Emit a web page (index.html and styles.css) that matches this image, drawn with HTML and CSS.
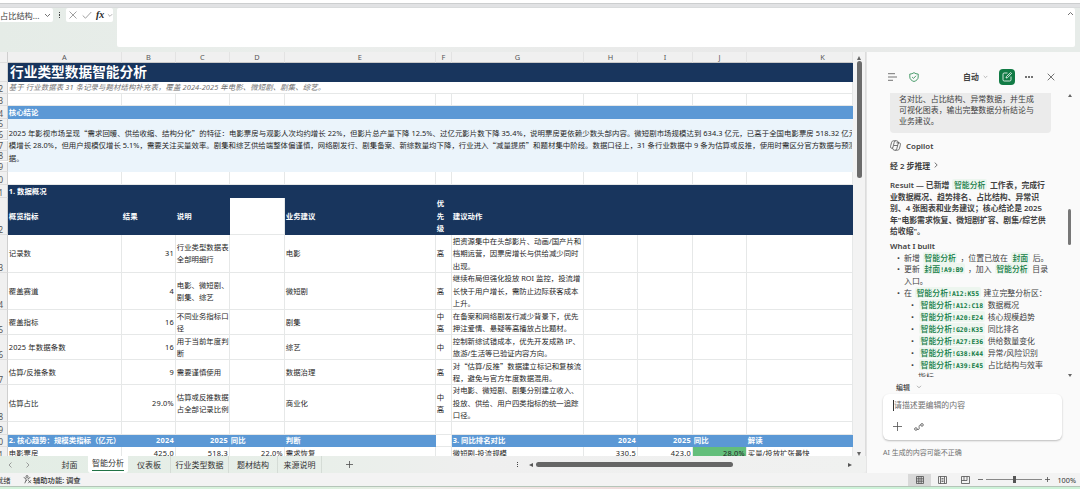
FILE: index.html
```html
<!DOCTYPE html>
<html lang="zh-CN">
<head>
    <meta charset="UTF-8">
    <meta name="viewport" content="width=device-width, initial-scale=1.0">
    <title>行业类型数据智能分析</title>
    <link rel="stylesheet" href="styles.css">
</head>
<body>
<div class="app">
    <div class="ribbon-edge"></div>
    <div class="formula-bar">
        <div class="name-box">
            <span>占比结构...</span>
            <svg width="7" height="5" viewBox="0 0 7 5"><path d="M1 1l2.5 2.5L6 1"/></svg>
        </div>
        <div class="dots"><i></i><i></i><i></i></div>
        <div class="fx-box">
            <svg class="pale" width="8" height="8" viewBox="0 0 8 8"><path d="M.5.5l7 7M7.500.5l-7 7"/></svg>
            <svg class="pale" width="10" height="8" viewBox="0 0 10 8"><path d="M.7 4.500L3.500 7.200 9.300 1"/></svg>
            <b>fx</b>
            <svg class="pale" width="6" height="5" viewBox="0 0 7 5"><path d="M1 1l2.500 2.500L6 1"/></svg>
        </div>
        <div class="formula-input"><svg width="7" height="5" viewBox="0 0 7 5"><path d="M1 4l2.500-2.500L6 4"/></svg></div>
    </div>

    <div class="main">
        <div class="book">
            <div class="sheet-area">
                <div class="sheet">
                    <div class="row head"><i></i><div>A</div><div>B</div><div>C</div><div>D</div><div>E</div><div>F</div><div>G</div><div>H</div><div>I</div><div>J</div><div class="k">K</div></div>
                    <div class="row r1 navy"><i></i><div class="all title">行业类型数据智能分析</div></div>
                    <div class="row r2"><i>2</i><div class="all note">基于 行业数据表 31 条记录与题材结构补充表，覆盖 2024-2025 年电影、微短剧、剧集、综艺。</div></div>
                    <div class="row h12"><i>3</i><div></div><div></div><div></div><div></div><div></div><div></div><div></div><div></div><div></div><div></div><div></div></div>
                    <div class="row h12 blue"><i>4</i><div class="all">核心结论</div></div>
                    <div class="row summary">
                        <div class="nums"><i>5</i><i>6</i><i>7</i><i>8</i><i>9</i></div>
                        <div class="all">
                            <p class="l1">2025 年影视市场呈现<q>“</q>需求回暖、供给收缩、结构分化<q>”</q>的特征：电影票房与观影人次均约增长 22%，但影片总产量下降 12.5%、过亿元影片数下降 35.4%，说明票房更依赖少数头部内容。微短剧市场规模达到 634.3 亿元，已高于全国电影票房 518.32 亿元</p>
                            <p class="l2">模增长 28.0%，但用户规模仅增长 5.1%，需要关注买量效率。剧集和综艺供给端整体偏谨慎，网络剧发行、剧集备案、新综数量均下降，行业进入<q>“</q>减量提质<q>”</q>和题材集中阶段。数据口径上，31 条行业数据中 9 条为估算或反推，使用时需区分官方数据与预测</p>
                            <p>据。</p>
                        </div>
                    </div>
                    <div class="row h13"><i>10</i><div></div><div></div><div></div><div></div><div></div><div></div><div></div><div></div><div></div><div></div><div></div></div>
                    <div class="row h12 navy"><i>11</i><div class="all">1. 数据概况</div></div>
                    <div class="row h37 navy"><i>12</i><div>概览指标</div><div>结果</div><div>说明</div><div class="empty"></div><div>业务建议</div><div>优<br>先<br>级</div><div>建议动作</div><div></div><div></div><div></div><div></div></div>
                    <div class="row h37"><i>13</i><div>记录数</div><div class="n">31</div><div>行业类型数据表<br>全部明细行</div><div></div><div>电影</div><div>高</div><div>把资源集中在头部影片、动画/国产片和<br>档期运营，因票房增长与供给减少同时<br>出现。</div><div></div><div></div><div></div><div></div></div>
                    <div class="row h37"><i>14</i><div>覆盖赛道</div><div class="n">4</div><div>电影、微短剧、<br>剧集、综艺</div><div></div><div>微短剧</div><div>高</div><div>继续布局但强化投放 ROI 监控，投流增<br>长快于用户增长，需防止边际获客成本<br>上升。</div><div></div><div></div><div></div><div></div></div>
                    <div class="row h25"><i>15</i><div>覆盖指标</div><div class="n">16</div><div>不同业务指标口<br>径</div><div></div><div>剧集</div><div>中<br>高</div><div>在备案和网络剧发行减少背景下，优先<br>押注爱情、悬疑等高播放占比题材。</div><div></div><div></div><div></div><div></div></div>
                    <div class="row h25"><i>16</i><div class="wide">2025 年数据条数</div><div class="n">16</div><div>用于当前年度判<br>断</div><div></div><div>综艺</div><div>中</div><div>控制新综试错成本，优先开发成熟 IP、<br>旅游/生活等已验证内容方向。</div><div></div><div></div><div></div><div></div></div>
                    <div class="row h25"><i>17</i><div>估算/反推条数</div><div class="n">9</div><div>需要谨慎使用</div><div></div><div>数据治理</div><div>高</div><div><span>对<q>“</q>估算/反推<q>”</q>数据建立标记和复核流<br>程，避免与官方年度数据混用。</span></div><div></div><div></div><div></div><div></div></div>
                    <div class="row h37"><i>18</i><div>估算占比</div><div class="n">29.0%</div><div>估算或反推数据<br>占全部记录比例</div><div></div><div>商业化</div><div>中<br>高</div><div>对电影、微短剧、剧集分别建立收入、<br>投放、供给、用户四类指标的统一追踪<br>口径。</div><div></div><div></div><div></div><div></div></div>
                    <div class="row h12"><i>19</i><div></div><div></div><div></div><div></div><div></div><div></div><div></div><div></div><div></div><div></div><div></div></div>
                    <div class="row h12 blue"><i>20</i><div>2. 核心趋势：规模类指标（亿元）</div><div class="n">2024</div><div class="n">2025</div><div>同比</div><div>判断</div><div class="empty"></div><div>3. 同比排名对比</div><div class="n">2024</div><div class="n">2025</div><div>同比</div><div>解读</div></div>
                    <div class="row h12"><i>21</i><div>电影票房</div><div class="n">425.0</div><div class="n">518.3</div><div class="n">22.0%</div><div>需求恢复</div><div></div><div>微短剧-投流规模</div><div class="n">330.5</div><div class="n">423.0</div><div class="n good">28.0%</div><div>买量/投放扩张最快</div></div>
                </div>
                <div class="vscroll"><b class="up"></b><span></span><b class="down"></b></div>
            </div>
            <div class="tabs">
                <div class="arrows">
                    <svg width="4" height="6" viewBox="0 0 4 6"><path d="M3.500.5L1 3l2.500 2.500"/></svg>
                    <svg width="4" height="6" viewBox="0 0 4 6"><path d="M.5.5L3 3 .5 5.500"/></svg>
                </div>
                <div class="tab t1">封面</div>
                <div class="tab active"><span>智能分析</span></div>
                <div class="tab t3">仪表板</div>
                <div class="tab t4">行业类型数据</div>
                <div class="tab t5">题材结构</div>
                <div class="tab t6">来源说明</div>
                <div class="add"><svg width="7" height="7" viewBox="0 0 7 7"><path d="M3.500 0v7M0 3.500h7"/></svg></div>
                <div class="dots"><i></i><i></i><i></i></div>
                <div class="hscroll"><b class="left"></b><span></span><b class="right"></b></div>
            </div>
        </div>

        <div class="copilot">
            <div class="cp-head">
                <svg class="menu" width="9" height="8" viewBox="0 0 9 8"><path d="M0 .7h7M0 4h9M0 7.300h5"/></svg>
                <svg class="shield" width="10" height="10" viewBox="0 0 10 10"><path d="M5 .6C6.300 1.600 7.700 2 9.200 2v3c0 2.200-1.700 3.700-4.200 4.500C2.500 8.700.8 7.200.8 5V2C2.300 2 3.700 1.600 5 .6z"/><path d="M3.100 5l1.400 1.400 2.500-2.600"/></svg>
                <span class="auto">自动</span>
                <svg class="pale" width="5" height="4" viewBox="0 0 7 5"><path d="M1 1l2.500 2.500L6 1"/></svg>
                <div class="new"><svg width="10" height="10" viewBox="0 0 10 10"><path d="M5.500 1H2.200Q1 1 1 2.200v5.600Q1 9 2.200 9h5.600Q9 9 9 7.800V4.500M4 6l.4-1.500L8.700.5l.9.9L5.500 5.700z"/></svg></div>
                <div class="more"><i></i><i></i><i></i></div>
                <svg class="close" width="8" height="8" viewBox="0 0 8 8"><path d="M.7.7l6.600 6.600M7.300.7L.7 7.300"/></svg>
            </div>
            <div class="chat">
                <div class="bubble">名对比、占比结构、异常数据，并生成<br>可视化图表，输出完整数据分析结论与<br>业务建议。</div>
                <div class="who">
                    <svg width="11" height="11" viewBox="0 0 11 11"><path d="M3.200 8.300H2C.6 8.300.3 7.200.7 5.700l.8-3C1.900 1.300 2.600.8 3.600.8h3.200c.8 0 1.100.5 1.300 1.300l.2.700h.7c1.400 0 1.700 1 1.300 2.500l-.8 3c-.4 1.400-1.100 1.900-2.100 1.900H4.200c-.8 0-1-.5-1.200-1.300M5.600.8C4.700.9 4.400 1.500 4.100 2.700L3 7c-.2.8-.4 1.200-1 1.300M5.400 10.200c.9-.1 1.200-.7 1.500-1.900L8 4c.2-.8.400-1.200 1-1.200H6.500M4 5.500h3.500"/></svg>
                    <span>Copilot</span>
                </div>
                <div class="steps">经 2 步推理 <svg width="4" height="6" viewBox="0 0 4 6"><path d="M.7.6L3.200 3 .7 5.400"/></svg></div>
                <div class="result">Result — 已新增 <code>智能分析</code> 工作表，完成行<br>业数据概况、趋势排名、占比结构、异常识<br>别、4 张图表和业务建议；核心结论是 2025<br>年"电影需求恢复、微短剧扩容、剧集/综艺供<br>给收缩"。</div>
                <div class="built">What I built</div>
                <ul>
                    <li>新增 <code>智能分析</code> ，位置已放在 <code>封面</code> 后。</li>
                    <li>更新 <code>封面<small>!A9:B9</small></code> ，加入 <code>智能分析</code> 目录<br>入口。</li>
                    <li>在 <code>智能分析<small>!A12:K55</small></code> 建立完整分析区：
                        <ul>
                            <li><code>智能分析<small>!A12:C18</small></code> 数据概况</li>
                            <li><code>智能分析<small>!A20:E24</small></code> 核心规模趋势</li>
                            <li><code>智能分析<small>!G20:K35</small></code> 同比排名</li>
                            <li><code>智能分析<small>!A27:E36</small></code> 供给数量变化</li>
                            <li><code>智能分析<small>!G38:K44</small></code> 异常/风险识别</li>
                            <li><code>智能分析<small>!A39:E45</small></code> 占比结构与效率<br>指标</li>
                        </ul>
                    </li>
                </ul>
                <div class="cp-scroll"><b class="up"></b><span></span><b class="down"></b></div>
            </div>
            <div class="mode">编辑 <svg class="pale" width="6" height="4" viewBox="0 0 7 5"><path d="M1 1l2.500 2.500L6 1"/></svg></div>
            <div class="prompt">
                <div class="placeholder">请描述要编辑的内容</div>
                <div class="tools">
                    <svg width="9" height="9" viewBox="0 0 9 9"><path d="M4.500 0v9M0 4.500h9"/></svg>
                    <svg width="10" height="8" viewBox="0 0 10 8"><circle cx="1.900" cy="6" r="1.300"/><circle cx="8" cy="1.900" r="1.300"/><path d="M3.200 6.500c2.600.6 2-1.300 1.900-2.300C5 3 5.300 1.900 6.700 1.900"/></svg>
                </div>
            </div>
            <div class="disclaimer">AI 生成的内容可能不正确</div>
        </div>
    </div>

    <div class="status">
        <span class="ready">就绪</span>
        <svg width="9" height="9" viewBox="0 0 9 9"><circle cx="4" cy="1.500" r="1"/><path d="M.7 2.500L3 3.500v1.700L1.800 8.300M7.300 2.500L5 3.500v1.200M3 5.500l1 .2M5.200 5.200l2.800 3M8 5.200l-2.800 3"/></svg>
        <span class="a11y">辅助功能: 调查</span>
        <div class="views">
            <div class="on"><svg width="8" height="8" viewBox="0 0 8 8"><path d="M.5.5h7v7h-7zM.5 2.800h7M.5 5.200h7M2.800.5v7M5.200.5v7"/></svg></div>
            <div><svg width="9" height="8" viewBox="0 0 9 8"><path d="M.5.5h8v7h-8zM2.500.5v7M6.500.5v7M3.500 2.500h2M3.500 4h2M3.500 5.500h2"/></svg></div>
            <div><svg width="9" height="8" viewBox="0 0 9 8"><path d="M.5.5h8v7h-8zM3 .5v4h3v-4M.5 4.500H3"/></svg></div>
        </div>
        <svg width="5" height="5" viewBox="0 0 5 5"><path d="M0 2.500h5"/></svg>
        <div class="zoom"><b></b></div>
        <svg width="5" height="5" viewBox="0 0 5 5"><path d="M0 2.500h5M2.500 0v5"/></svg>
        <span class="pct">100%</span>
    </div>
    <div class="taskbar"></div>
</div>
</body>
</html>
```

FILE: styles.css
```css
* { box-sizing: border-box; }
body { margin: 0; font-family: "Noto Sans", "Noto Sans CJK SC", sans-serif; font-size: 7.4px; color: #262626; overflow: hidden; }
svg { fill: none; stroke: #505050; stroke-width: .8; flex: none; display: block; }
svg.pale { stroke: #888; }
i { font-style: normal; }
p { margin: 0; }
q { quotes: none; font-family: "Noto Sans CJK SC", sans-serif; }
q::before, q::after { content: none; }

.app { width: 1080px; height: 489px; display: flex; flex-direction: column; background: #ececec; }
.ribbon-edge { height: 8px; background: #e1e2e4; border-top: 3px solid #fff; border-bottom: 1px solid #d9dbdc; box-shadow: inset 0 1px #cccecf; }

/* formula bar */
.formula-bar { height: 44px; display: flex; align-items: flex-start; background: linear-gradient(90deg, #e5ece7, #ebeeec 30%, #e9e9e9 70%, #e7ece9); }
.name-box { width: 53px; height: 14px; display: flex; align-items: center; justify-content: space-between; padding-right: 2px; background: #fff; font-size: 8.200px; white-space: nowrap; color: #444; border-radius: 0 2px 2px 0; }
.dots { width: 13px; height: 14px; display: flex; flex-direction: column; align-items: center; justify-content: center; gap: 1px; }
.dots i { width: 1.300px; height: 1.300px; background: #444; }
.fx-box { width: 47px; height: 14px; display: flex; align-items: center; gap: 5px; padding-left: 3px; background: #fff; border-radius: 2px; }
.fx-box b { font: italic bold 10px/12px "Liberation Serif", serif; width: 9px; margin: 0 -3px 0 -1px; }
.formula-input { flex: 1; height: 39px; margin-left: 4px; margin-right: 5px; padding: 3px 1px; display: flex; justify-content: flex-end; background: #fff; border-radius: 2px; }

.main { height: 421px; display: flex; }
.book { width: 866px; display: flex; flex-direction: column; }
.sheet-area { height: 404px; display: flex; }

/* grid */
.sheet { width: 853px; height: 404px; overflow: hidden; background: #fff; }
.row { display: grid; grid-template-columns: 8px 114px 54px 54px 55px 151px 16px 132px 54px 55px 54px 106px; overflow: hidden; }
.row > div { display: flex; align-items: center; padding: 0 1px 0 .800px; border-right: 1px solid #e6e8e8; border-bottom: 1px solid #e6e8e8; line-height: 12.400px; white-space: nowrap; overflow: hidden; }
.row > .all { grid-column: 2 / -1; }
.row i { display: flex; align-items: flex-end; justify-content: flex-end; padding-right: 4px; background: #f0f0f0; border-right: 1px solid #cfcfcf; border-bottom: 1px solid #dedede; font-size: 8px; line-height: 9px; color: #555; overflow: hidden; }
.row .n { justify-content: flex-end; letter-spacing: .25px; }
.row .wide { letter-spacing: .12px; }
.head { height: 11px; }
.head > div { justify-content: center; background: #f0f0f0; border-bottom-color: #c9c9c9; border-right-color: #e3e3e3; color: #555; line-height: 10px; }
.head .k { padding-left: 47px; }
.r1 { height: 19px; }
.r2 { height: 12px; }
.h12 { height: 12.400px; }
.h13 { height: 13px; }
.h25 { height: 24.900px; }
.h37 { height: 37.500px; }
.navy > div { background: #18355d; border-color: #18355d; color: #fff; font-weight: bold; }
.blue > div { background: #5b98d5; border-color: #5b98d5; color: #fff; font-weight: bold; }
.row > .empty { background: #fff; border-color: #e6e8e8; }
.row > .title { font-size: 13.700px; padding-left: 2px; }
.row > .note { font-style: italic; color: #707070; letter-spacing: .1px; }
.row > .good { background: #63be7b; }
.summary { height: 53.500px; }
.summary .nums { display: grid; grid-template-rows: repeat(5, 1fr); padding: 0; border: 0; }
.summary > .all { display: block; padding-top: 8px; background: #ebf4fb; border-color: #ebf4fb; }
.summary p { height: 12.500px; }
.summary .l1 { letter-spacing: .055px; }
.summary .l2 { letter-spacing: .035px; }

/* scrollbars */
.vscroll { width: 13px; display: flex; flex-direction: column; align-items: center; padding: 4px 0 0; background: #f3f3f3; border-right: 1px solid #dcdcdc; }
.vscroll span { width: 5px; height: 117px; margin-top: 1px; border-radius: 3px; background: #6b6b6b; }
.up, .down { border: 2.500px solid transparent; border-top: 0; border-bottom: 4px solid #666; }
.down { border-bottom: 0; border-top: 4px solid #666; margin-top: auto; }
.left, .right { border: 2.500px solid transparent; border-left: 0; border-right: 4px solid #555; }
.right { border-right: 0; border-left: 4px solid #555; margin-left: auto; }

/* sheet tabs */
.tabs { height: 17px; display: flex; align-items: center; background: linear-gradient(90deg, #e3ede5, #e8efe9 35%, #efefef 55%, #f0f1f0); font-size: 8px; color: #333; border-radius: 0 0 4px 0; }
.tabs .dots { margin-left: auto; }
.arrows { width: 51px; display: flex; gap: 14px; padding-left: 8px; }
.arrows svg { stroke: #888; }
.tab { height: 17px; display: flex; align-items: center; justify-content: center; white-space: nowrap; }
.t1 { width: 37px; }
.active { width: 40px; background: #fff; align-items: flex-start; border-radius: 0 0 3px 3px; }
.active span { height: 15px; line-height: 14px; border-bottom: 1px solid #217346; }
.t3 { width: 43px; border-right: 1px solid #d5dcd6; }
.t4 { width: 58px; border-right: 1px solid #d5dcd6; }
.t5 { width: 49px; border-right: 1px solid #d5dcd6; }
.t6 { width: 44px; border-right: 1px solid #d5dcd6; }
.add { padding-left: 24px; }
.hscroll { width: 342px; display: flex; align-items: center; padding: 0 14px 0 5px; }
.hscroll span { width: 197px; height: 5px; margin-left: 3px; border-radius: 3px; background: #666; }

/* copilot pane */
.copilot { width: 214px; height: 424px; background: #fafafa; border-left: 1px solid #e5e5e5; font-size: 7.900px; color: #424242; }
.cp-head { height: 41px; display: flex; align-items: center; padding: 8px 0 0 21px; }
.shield { margin-left: 12px; stroke: #21874a; }
.auto { margin: 0 4px 0 44px; font-weight: bold; }
.new { width: 16px; height: 16px; margin-left: 11px; display: flex; align-items: center; justify-content: center; background: #117b45; border-radius: 4px; }
.new svg { stroke: #fff; }
.more { display: flex; gap: 1px; margin: 0 14px 0 10px; }
.more i { width: 2px; height: 2px; background: #444; border-radius: 1px; }
.chat { position: relative; height: 284px; overflow: hidden; padding-left: 23px; }
.bubble { width: 161px; height: 40px; padding: .500px 0 0 9px; background: #ebebeb; border-radius: 0 0 4px 4px; font-size: 7.950px; line-height: 11.400px; white-space: nowrap; }
.who { display: flex; align-items: center; gap: 5px; height: 11px; margin-top: 7px; font-weight: 600; }
.steps { display: flex; align-items: center; gap: 4px; height: 12px; margin-top: 8px; font-weight: 600; }
.result { margin-top: 9px; font-weight: 600; line-height: 11.500px; white-space: nowrap; font-size: 7.850px; }
.built { margin-top: 2px; height: 12px; line-height: 12px; font-weight: 600; }
.chat ul { margin: 0; padding: 0; list-style: none; line-height: 11.900px; white-space: nowrap; }
.chat > ul { padding: 1px 0 0 14px; }
.chat ul ul { padding-left: 14px; }
.chat li::before { content: "•"; float: left; width: 7px; margin-left: -7px; }
code { padding: 0 1.500px; margin: 0 1px; background: #edf6ef; border-radius: 2px; color: #117b45; font: 500 7.900px/0 "Noto Sans CJK SC", sans-serif; }
code small { font: bold 6.450px/0 "DejaVu Sans Mono", monospace; }
.cp-scroll { position: absolute; top: 1px; right: 8px; height: 283px; width: 5px; display: flex; flex-direction: column; align-items: center; }
.cp-scroll span { width: 3px; height: 36px; margin-top: 112px; border-radius: 2px; background: #777; }
.cp-scroll b { border-width: 2px; }
.cp-scroll .up { border-top: 0; border-bottom-width: 3px; }
.cp-scroll .down { border-bottom: 0; border-top-width: 3px; }
.mode { height: 17px; display: flex; align-items: center; gap: 6px; padding: 2px 0 0 29px; font-size: 7px; font-weight: 500; }
.prompt { width: 179px; height: 46px; margin-left: 16px; padding: 6px 10px 0; background: #fff; border-radius: 6px; box-shadow: 0 1px 2px #bbb; color: #707070; }
.placeholder { height: 11px; line-height: 11px; border-left: 1px solid #333; }
.tools { display: flex; align-items: center; gap: 12px; margin-top: 11px; }
.disclaimer { margin: 7px 0 0 16px; font-size: 7px; line-height: 12px; color: #707070; }

/* status bar */
.status { height: 13px; display: flex; align-items: center; background: #f3f3f3; font-size: 7.300px; color: #333; white-space: nowrap; z-index: 1; }
.ready { width: 23px; text-indent: -4px; }
.a11y { margin-left: 1px; font-weight: 500; }
.views { margin-left: auto; margin-right: 1px; display: flex; }
.views div { width: 23px; height: 12px; display: flex; align-items: center; justify-content: center; }
.views .on { background: #d9d9d9; }
.zoom { width: 56px; height: 8px; margin: 0 3px; display: flex; align-items: center; justify-content: center; background: linear-gradient(#888, #888) center / 100% 1px no-repeat; }
.zoom b { width: 3px; height: 7px; background: #555; }
.pct { margin: 0 4px 0 7px; }
.taskbar { height: 3px; border-top: 1px solid #b5c5b9; background: linear-gradient(90deg, #d3f2da, #d8f2dc 28%, #eeece8 40%, #efd9d9 60%, #eadfdb 70%, #cdf2d8 78%, #cdf2d8); }
```
